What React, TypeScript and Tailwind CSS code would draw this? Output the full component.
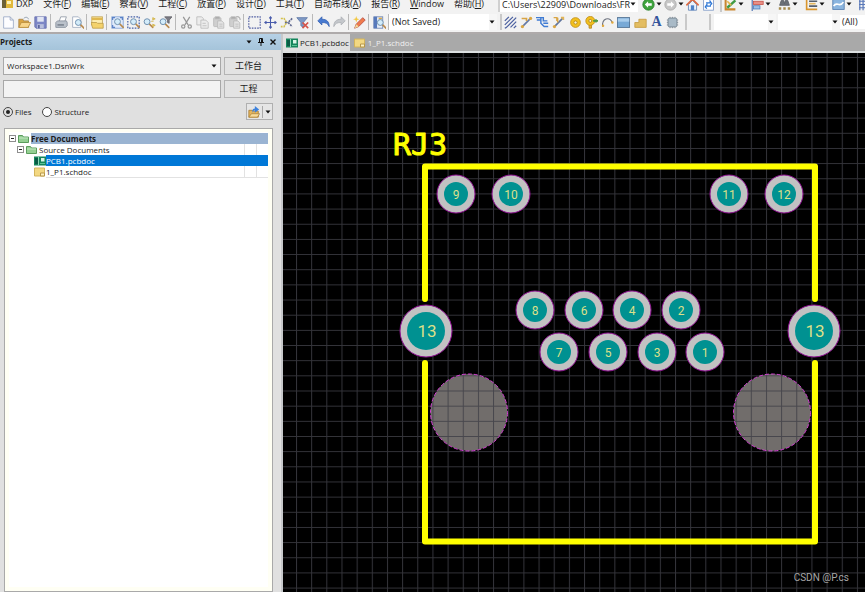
import React, { useState } from 'react';

const menus = [
  ['文件', 'F'],
  ['编辑', 'E'],
  ['察看', 'V'],
  ['工程', 'C'],
  ['放置', 'P'],
  ['设计', 'D'],
  ['工具', 'T'],
  ['自动布线', 'A'],
  ['报告', 'R'],
];

const pads = [
  { n: '9', x: 173, y: 141 },
  { n: '10', x: 228, y: 141 },
  { n: '11', x: 446, y: 141 },
  { n: '12', x: 501, y: 141 },
  { n: '8', x: 252, y: 257 },
  { n: '6', x: 301, y: 257 },
  { n: '4', x: 349, y: 257 },
  { n: '2', x: 398, y: 257 },
  { n: '7', x: 276, y: 299 },
  { n: '5', x: 325, y: 299 },
  { n: '3', x: 374, y: 299 },
  { n: '1', x: 422, y: 299 },
];

const Lens = ({ x = 6, y = 6 }: { x?: number; y?: number }) => (
  <g transform={`translate(${x} ${y})`}>
    <path d="M3 3l4 4" stroke="#b98a4e" strokeWidth="2" strokeLinecap="round" />
    <circle r="3.6" fill="#d3ecfa" stroke="#6f8fae" strokeWidth="1.2" />
  </g>
);

const Clip = () => (
  <g stroke="#b9b9b9" fill="#e4e4e4">
    <rect x="2" y="2" width="9" height="11" rx="1" fill="#cfcfcf" />
    <rect x="4" y="1" width="5" height="2.5" fill="#aaa" />
    <path d="M7 6h5l2.500 2.500V15H7z" />
    <path d="M9 10h4M9 12.500h4" />
  </g>
);

const art: Record<string, React.ReactNode> = {
  'New': <path d="M2 1h8l4 4v10H2zM10 1v4h4" fill="#fdfdff" stroke="#98a6c4" />,
  'Open': (
    <>
      <path d="M1 14V4h5l1 2h6v8z" fill="#d9a443" stroke="#a98345" />
      <path d="M1 14l3-6h11.500l-3 6z" fill="#f8d58a" stroke="#b98d3d" />
      <path d="M7 3c2-2 5-2 6 1" fill="none" stroke="#7e8fa5" />
    </>
  ),
  'Save': (
    <>
      <path d="M1 1h14v14H2.500L1 13.500z" fill="#7d87c6" stroke="#666fae" />
      <rect x="4" y="1" width="8" height="6" fill="#e2e6f4" />
      <rect x="4" y="10" width="8" height="5" fill="#b9c0dd" />
      <rect x="5" y="11" width="2" height="4" fill="#575f98" />
    </>
  ),
  'Print': (
    <>
      <path d="M5 7l2-6h7l-2 6z" fill="#fff" stroke="#8d96a3" />
      <path d="M1 8l2-2h11l1 2v4l-2 2H1z" fill="#bac1ca" stroke="#858e9a" />
      <path d="M3 11h8" stroke="#68717e" strokeWidth="1.5" />
    </>
  ),
  'Preview': (
    <>
      <path d="M2 1h7l3 3v10H2z" fill="#fff" stroke="#9da9bd" />
      <Lens x={9} y={8} />
    </>
  ),
  'Workspace': (
    <>
      <rect x="1" y="1" width="13" height="10" fill="#fdedb0" stroke="#c1a457" />
      <path d="M1 2h13v3H1z" fill="#e0b84f" />
      <path d="M0 8h7l1 1h7v6H2z" fill="#f4d26b" stroke="#bd9c4a" />
    </>
  ),
  'Fit': (
    <>
      <rect x="1" y="1" width="14" height="14" fill="#e1ebfb" stroke="#7f9fd4" />
      <path d="M2 5V2h3M11 2h3v3M2 11v3h3" fill="none" stroke="#5b82c6" strokeWidth="1.5" />
      <Lens x={8} y={7} />
    </>
  ),
  'Fit area': (
    <>
      <rect x="1" y="1" width="14" height="14" fill="none" stroke="#4560a8" strokeWidth="1.5" strokeDasharray="2 1.5" />
      <Lens x={8} y={7} />
    </>
  ),
  'Zoom selected': (
    <>
      <Lens x={5} y={7} />
      <path d="M12 2l3 1.500L12 5zM12 10l3 1.500-3 1.500zM10 6.500h3" fill="#e9cd5e" stroke="#d0b34b" />
    </>
  ),
  'Zoom filter': (
    <>
      <Lens x={5} y={7} />
      <path d="M7 1h9l-3.500 4v4l-2-1V5z" fill="#7b7b83" stroke="#63636b" />
    </>
  ),
  'Cut': (
    <g stroke="#979797" strokeWidth="1.5" fill="none">
      <path d="M4 1l6 10M12 1L6 11" />
      <circle cx="4" cy="13" r="2" />
      <circle cx="12" cy="13" r="2" />
    </g>
  ),
  'Copy': (
    <g fill="#ececec" stroke="#bababa">
      <path d="M1 1h6l2 2v8H1z" />
      <path d="M6 5h6l3 3v7H6zM8 9h4M8 12h5" />
    </g>
  ),
  'Paste': <Clip />,
  'Rubber stamp': (
    <>
      <Clip />
      <path d="M10 1c4-1 5 2 5 4" fill="none" stroke="#b4b4b4" strokeWidth="1.5" />
    </>
  ),
  'Select area': <rect x="1" y="1" width="14" height="14" fill="none" stroke="#4e5ca1" strokeWidth="1.4" strokeDasharray="2 1.3" />,
  'Move': (
    <path d="M8 1v14M1 8h14M6.500 3L8 1l1.500 2M6.500 13L8 15l1.500-2M3 6.500L1 8l2 1.500M13 6.500L15 8l-2 1.500" fill="none" stroke="#485bab" strokeWidth="1.3" />
  ),
  'Deselect': (
    <g fill="none" strokeWidth="2" strokeDasharray="2.500 1">
      <path d="M1 3h4l3 5-3 5H1" stroke="#d3c14e" />
      <path d="M15 3l-5 5 5 5" stroke="#5f688f" />
      <path d="M6 8h4" stroke="#656d8a" />
    </g>
  ),
  'Clear filter': (
    <>
      <path d="M1 2h13L9 8v6l-3-2V8z" fill="#7e99c5" stroke="#5f79a8" />
      <path d="M8 8l7 7M15 8l-7 7" stroke="#d65348" strokeWidth="2" />
    </>
  ),
  'Undo': <path d="M1 6l5-5v3c6 0 9 3 9 9-2-4-4-5-9-5v3z" fill="#477ad1" stroke="#3561b2" />,
  'Redo': <path d="M15 6l-5-5v3c-6 0-9 3-9 9 2-4 4-5 9-5v3z" fill="#c4c7cb" stroke="#acb0b5" />,
  'Cross probe': (
    <>
      <path d="M2 15l2-5 8-8 3 3-8 8z" fill="#ef7b4c" stroke="#b5483e" />
      <path d="M2 15l2-5 3 3z" fill="#f2db9a" />
      <path d="M4 0l1 3 3 1-3 1-1 3-1-3-3-1 3-1z" fill="#f3c944" />
    </>
  ),
  'Browse': (
    <>
      <rect x="1" y="1" width="11" height="14" fill="#e9eef7" stroke="#6580b0" />
      <path d="M1 1h4v14H1z" fill="#5779bb" />
      <path d="M7 3h4" stroke="#d8a94a" strokeWidth="2" />
      <Lens x={9} y={8} />
    </>
  ),
  'Multi-route': <path d="M1 6l5-5M1 11L11 1M3 14L15 2M8 14l7-7M12 15l3-3M1 15l2-1" stroke="#4a5f9f" strokeWidth="1.5" />,
  'Route': (
    <>
      <path d="M2 14L13 3" stroke="#6378a5" strokeWidth="2" />
      <path d="M2 3h6v3" fill="none" stroke="#d9a545" strokeWidth="2" />
      <circle cx="3" cy="13" r="2" fill="#dba744" />
      <circle cx="13" cy="3" r="2" fill="#dba744" />
    </>
  ),
  'Differential pair': (
    <path d="M0 2h9v4h5M1 5h5v4l4 4h5M9 9h6M6 2v7" fill="none" stroke="#3f7bd3" strokeWidth="1.800" />
  ),
  'Line': (
    <>
      <path d="M3 13L13 3" stroke="#5f749c" strokeWidth="2" />
      <path d="M2 2h4v4M7 2v6" fill="none" stroke="#d9a545" strokeWidth="1.8" />
      <circle cx="3" cy="13" r="2" fill="#dba744" />
      <path d="M11 2h3v3" fill="none" stroke="#e2b455" strokeWidth="2" />
    </>
  ),
  'Pad': (
    <>
      <circle cx="8" cy="8" r="6" fill="#f2c01d" stroke="#bf8c16" />
      <circle cx="8" cy="8" r="2" fill="#fff7d0" stroke="#a97c19" />
    </>
  ),
  'Via': (
    <>
      <path d="M5 9v6h3V9z" fill="#e6b52b" stroke="#b78617" />
      <circle cx="6.500" cy="6" r="5.500" fill="#f2c01d" stroke="#bf8c16" />
      <circle cx="6.500" cy="6" r="1.800" fill="#fff7d0" stroke="#a97c19" />
      <path d="M10 6h6M13.500 4v4" stroke="#4f9a45" strokeWidth="2" />
    </>
  ),
  'Arc': (
    <>
      <path d="M2 13C1 3 10 0 14 8" fill="none" stroke="#6e7480" strokeWidth="1.300" />
      <circle cx="2.500" cy="12" r="1.500" fill="#e2a93c" />
      <circle cx="14" cy="8" r="1.500" fill="#e2a93c" />
    </>
  ),
  'Fill': (
    <>
      <rect x="0.500" y="2" width="15" height="12" fill="#78a9d6" stroke="#48698d" />
      <path d="M1 3h14v4H1z" fill="#a9cdec" />
    </>
  ),
  'Polygon': <path d="M1 14V8h5V4h9v10z" fill="#e3bd61" stroke="#c59b41" />,
  'Component': (
    <>
      <path d="M5 1v14M8 1v14M11 1v14M1 5h14M1 8h14M1 11h14" stroke="#8a959f" />
      <rect x="2.500" y="2.500" width="11" height="11" rx="2" fill="#a9bac7" stroke="#6f7d89" />
    </>
  ),
  'Back': (
    <>
      <circle cx="8" cy="8" r="7" fill="#3ea33d" stroke="#2a7f2c" />
      <path d="M3.500 8l4-4v2.500H12v3H7.500V12z" fill="#fff" />
    </>
  ),
  'Forward': (
    <>
      <circle cx="8" cy="8" r="7" fill="#c6c6c6" stroke="#a9a9a9" />
      <path d="M12.500 8l-4-4v2.500H4v3h4.500V12z" fill="#fff" />
    </>
  ),
  'Home': (
    <>
      <path d="M3 8v7h10V8L8 3z" fill="#eaf2fb" stroke="#5c80b3" />
      <path d="M0.500 9L8 1.500 15.500 9" fill="none" stroke="#dd6a43" strokeWidth="2" />
      <rect x="6" y="9" width="4" height="6" fill="#4e82c8" />
    </>
  ),
  'Refresh': (
    <>
      <rect x="2" y="1" width="12" height="14" fill="#fff" stroke="#7995c4" />
      <path d="M5 6h5V4l2 3-2 2M11 10H6V8l-2 3 2 2" fill="none" stroke="#2f78d6" strokeWidth="1.500" />
    </>
  ),
  'Utilities': (
    <>
      <path d="M2 2v12h12" fill="none" stroke="#c9862e" strokeWidth="2.500" />
      <path d="M4 12L14 3" stroke="#3f9a44" strokeWidth="3" />
      <path d="M4 4l5 5" stroke="#e1b54b" strokeWidth="2" />
    </>
  ),
  'Alignment': (
    <>
      <path d="M1.500 0v16" stroke="#5579b8" strokeWidth="1.500" />
      <rect x="3" y="4" width="12" height="4" fill="#e98f86" stroke="#c8544a" />
      <rect x="3" y="9.500" width="8" height="4" fill="#9cc0ea" stroke="#527fb7" />
    </>
  ),
  'Find': (
    <>
      <path d="M2 9l2-6h3l1 4 1-4h3l2 6z" fill="#6b7077" stroke="#565b62" />
      <path d="M1 13h3M6.500 13h3M12 13h3" stroke="#a78b4c" strokeWidth="3" />
    </>
  ),
  'Dimension': (
    <>
      <path d="M2 1v13h13" fill="none" stroke="#d9962e" strokeWidth="2" />
      <path d="M5 4h10M5 10h10" stroke="#575f6b" strokeWidth="2" />
      <path d="M5 7h8" stroke="#e5b75d" strokeWidth="2" />
    </>
  ),
  'Rooms': (
    <>
      <rect x="1" y="2" width="14" height="12" fill="#8bb5df" stroke="#4d78ac" />
      <path d="M2 10c4-7 7 3 12-5" fill="none" stroke="#fff" strokeWidth="2" />
    </>
  ),
  'Grid': <path d="M1 2v13M5 2v13M9 2v13M13 2v13M0 4h16M0 8h16M0 12h16" stroke="#5a79ba" strokeWidth="1.500" />,
};

function ToolButton({ name }: { name: string }) {
  return (
    <button type="button" aria-label={name} className="flex h-4 w-4 shrink-0 items-center justify-center">
      {name === 'String' ? (
        <span className="font-['Liberation_Serif',serif] text-[14px] leading-4 font-bold text-[#35559c]">A</span>
      ) : (
        <svg viewBox="0 0 16 16" className="h-[13px] w-[13px]" fill="none">
          {art[name]}
        </svg>
      )}
    </button>
  );
}

const Arrow = () => (
  <svg viewBox="0 0 6 4" className="h-1 w-1.5 shrink-0">
    <path d="M0.500 0.500h5L3 3.500z" fill="#111" />
  </svg>
);

function Group({ names, className }: { names: string[]; className: string }) {
  return (
    <div className={`flex shrink-0 border-r border-[#b9b9b9] ${className}`}>
      {names.map(n => <ToolButton key={n} name={n} />)}
    </div>
  );
}

function Combo({ label, value, className }: { label: string; value: string; className: string }) {
  return (
    <div className={`relative flex h-4 shrink-0 items-center bg-white ${className}`}>
      <select aria-label={label} className="h-4 w-full appearance-none pl-[3px] leading-4 outline-none">
        <option>{value}</option>
      </select>
      <span className="pointer-events-none absolute inset-y-0 right-0 flex w-2 items-center bg-[#f6f6f6]">
        <Arrow />
      </span>
    </div>
  );
}

function PcbIcon() {
  return (
    <svg viewBox="0 0 12 10" className="h-2.5 w-3 shrink-0">
      <rect width="12" height="9" y="0.500" fill="#14855c" />
      <path d="M1 2h3v6H1z" fill="#0a5a45" />
      <path d="M4.500 1v8" stroke="#8fd8b7" />
      <rect x="7" y="2" width="3.500" height="3.500" fill="#d7f4e5" />
      <path d="M6 7.500h5" stroke="#5cc295" />
    </svg>
  );
}

function SchIcon() {
  return (
    <svg viewBox="0 0 12 10" className="h-2.5 w-3 shrink-0">
      <path d="M0.500 1h10v8h-10z" fill="#f3d882" stroke="#d3b45c" />
      <path d="M6.500 6h4v3h-4z" fill="#fff2c0" stroke="#b8974a" />
    </svg>
  );
}

function FolderIcon() {
  return (
    <svg viewBox="0 0 11 9" className="h-[9px] w-[11px] shrink-0">
      <path d="M0.500 8.500v-7h4l1 1.500h5v5.500z" fill="#95cf93" stroke="#5b9d5c" />
      <path d="M1 4h9" stroke="#c5e9c1" />
    </svg>
  );
}

function Minus() {
  return (
    <svg viewBox="0 0 7 7" className="h-[7px] w-[7px] shrink-0">
      <rect x="0.500" y="0.500" width="6" height="6" fill="#fff" stroke="#8e8e8e" />
      <path d="M2 3.500h3" stroke="#222" />
    </svg>
  );
}

function TopBars() {
  const nav = ['Utilities', 'Alignment', 'Find', 'Dimension', 'Rooms'];
  return (
    <header className="overflow-x-clip border-b-2 border-[#aeaaaa] bg-[#f2f2f2]">
      <nav className="flex h-3 items-start leading-2">
        <div className="flex w-[498px] shrink-0 items-start gap-2.5 pl-0.5">
          <button type="button" className="flex items-start gap-[3px]">
            <svg viewBox="0 0 11 8" className="h-2 w-[11px]">
              <path d="M0 0h11v8H0z" fill="#e2b93c" />
              <path d="M0 0h4v8H0z" fill="#6d6136" />
              <path d="M5 1h4v3H5z" fill="#fff3b8" />
            </svg>
            DXP
          </button>
          {menus.map(([text, key]) => (
            <button key={key} type="button" className="whitespace-nowrap">
              {text}(<u>{key}</u>)
            </button>
          ))}
          <button type="button"><u>W</u>indow</button>
          <button type="button" className="whitespace-nowrap">帮助(<u>H</u>)</button>
        </div>
        <div className="mr-0.5 flex h-3 w-[140px] shrink-0 items-start border-l-2 border-[#d0d0d0] bg-white pl-0.5">
          <input
            aria-label="Document path"
            defaultValue="C:\Users\22909\Downloads\FR."
            className="h-2 w-full min-w-0 outline-none"
          />
          <span className="flex h-2 items-center pr-0.5"><Arrow /></span>
        </div>
        <div className="flex h-3 shrink-0 items-end border-r-2 border-[#c9c9c9] pr-1">
          {['Back', 'Forward'].map(n => (
            <span key={n} className="flex h-4 items-center">
              <ToolButton name={n} />
              <Arrow />
            </span>
          ))}
          <ToolButton name="Home" />
          <ToolButton name="Refresh" />
        </div>
        <div className="flex h-3 shrink-0 items-end gap-[5px]">
          {nav.map(n => (
            <span key={n} className="flex h-4 items-center">
              <ToolButton name={n} />
              <Arrow />
            </span>
          ))}
          <ToolButton name="Grid" />
        </div>
      </nav>

      <div className="flex h-5 items-center">
        <Group className="pr-0.5" names={['New', 'Open', 'Save']} />
        <Group className="pr-px pl-0.5" names={['Print', 'Preview']} />
        <Group className="pr-px pl-0.5" names={['Workspace']} />
        <Group className="px-0.5" names={['Fit', 'Fit area', 'Zoom selected', 'Zoom filter']} />
        <Group className="pr-px pl-0.5" names={['Cut', 'Copy', 'Paste', 'Rubber stamp']} />
        <Group className="px-0.5" names={['Select area', 'Move', 'Deselect', 'Clear filter']} />
        <Group className="pr-px pl-0.5" names={['Undo', 'Redo']} />
        <Group className="pr-px pl-0.5" names={['Cross probe']} />
        <Group className="pr-px pl-0.5" names={['Browse']} />
        <Combo label="Filter" value="(Not Saved)" className="w-[108px]" />
        <div className="ml-[3px] flex h-4 w-[187px] shrink-0 justify-around border-r-2 border-l-2 border-[#c9c9c9] pr-1">
          {['Multi-route', 'Route', 'Differential pair', 'Line', 'Pad', 'Via', 'Arc', 'Fill', 'Polygon', 'String', 'Component'].map(n => (
            <ToolButton key={n} name={n} />
          ))}
        </div>
        <div className="mr-[3px] h-4 w-6 shrink-0 border-r-2 border-[#c9c9c9]" />
        <Combo label="Net" value="" className="mr-0.5 w-[62px]" />
        <Combo label="Layer" value="" className="w-[62px]" />
        <span className="flex-1 bg-white pl-0.5">(All)</span>
      </div>
    </header>
  );
}

function ProjectsPanel() {
  const [view, setView] = useState('files');
  const [selected, setSelected] = useState('PCB1.pcbdoc');

  return (
    <aside className="flex w-[283px] shrink-0 flex-col border-r-2 border-[#c6c8ca] bg-[#e0e0e0] text-[8px] font-medium">
      <div className="flex h-4 items-center bg-linear-to-b from-[#b6d1e6] to-[#a5c4da] pr-[5px]">
        <h2 className="flex-1 font-bold">Projects</h2>
        <div className="flex items-center gap-1.5">
          <button type="button" aria-label="Panel menu"><Arrow /></button>
          <button type="button" aria-label="Pin">
            <svg viewBox="0 0 6 8" className="h-2 w-1.5">
              <path d="M1.500 0.500h3v4h-3zM0 4.500h6M3 5v3" fill="none" stroke="#111" />
              <path d="M3.500 0.500v4" stroke="#111" />
            </svg>
          </button>
          <button type="button" aria-label="Close">
            <svg viewBox="0 0 6 6" className="h-1.5 w-1.5">
              <path d="M0.500 0.500l5 5M5.500 0.500l-5 5" stroke="#111" strokeWidth="1.400" />
            </svg>
          </button>
        </div>
      </div>

      <div className="flex flex-1 flex-col pt-[7px] pr-2 pl-[3px]">
        <div className="flex gap-[3px]">
          <div className="relative flex-1">
            <select aria-label="Workspace" className="block h-[18px] w-full appearance-none border border-[#a8a8a8] bg-[#f3f3f3] pl-[3px] outline-none">
              <option>Workspace1.DsnWrk</option>
            </select>
            <span className="pointer-events-none absolute inset-y-0 right-1 flex items-center"><Arrow /></span>
          </div>
          <button type="button" className="h-[18px] w-[49px] border border-[#b4b4b4] bg-[#e3e3e3] text-[9px] leading-4 font-normal">工作台</button>
        </div>
        <div className="mt-[5px] flex gap-[3px]">
          <input aria-label="Project" className="h-[18px] min-w-0 flex-1 border border-[#a8a8a8] bg-[#f3f3f3] px-1 outline-none" />
          <button type="button" className="h-[18px] w-[49px] border border-[#b4b4b4] bg-[#e3e3e3] text-[9px] leading-4 font-normal">工程</button>
        </div>
        <div className="mt-[5px] flex items-center">
          {[['files', 'Files'], ['structure', 'Structure']].map(([id, label]) => (
            <label key={id} className="mr-[11px] flex items-center gap-0.5">
              <input
                type="radio"
                name="view"
                checked={view === id}
                onChange={() => setView(id)}
                className="h-2.5 w-2.5 appearance-none rounded-full border border-[#444] bg-white p-0.5 checked:bg-[#222] checked:bg-clip-content"
              />
              {label}
            </label>
          ))}
          <button type="button" aria-label="Open project" className="ml-auto flex h-[17px] w-[27px] items-center justify-between border border-[#b0b0b0] bg-[#e6e6e6] px-px">
            <svg viewBox="0 0 14 14" className="h-3 w-3">
              <path d="M1 13V5h4l1 1h6v7z" fill="#e6b55a" stroke="#a97e36" />
              <path d="M1 13l3-4h9.500L11 13z" fill="#f9dc9b" stroke="#b38a42" />
              <path d="M5 8c0-4 1-5 3-5V0l5 4-5 4V5C7 5 6 6 5 8z" fill="#3e82dc" />
            </svg>
            <span className="h-3 border-l border-[#aaa]" />
            <Arrow />
          </button>
        </div>

        <div role="tree" className="mt-2 ml-px flex-1 border border-[#a9a9a9] bg-[#fffff4] pt-[3px] pr-1 pb-1 pl-1 leading-[11px]">
          <div className="min-h-full bg-white">
            <div role="treeitem" aria-expanded="true" className="flex h-3 items-center gap-0.5">
              <Minus />
              <FolderIcon />
              <span className="flex-1 bg-[#9ab4d2] font-bold">Free Documents</span>
            </div>
            <div role="treeitem" aria-expanded="true" className="flex h-[11px] items-center gap-0.5 pl-2">
              <Minus />
              <FolderIcon />
              <span className="flex-1">Source Documents</span>
              <span className="h-full w-2.5 border-l border-[#e2e2e2]" />
              <span className="h-full w-3 border-l border-[#e2e2e2]" />
            </div>
            {['PCB1.pcbdoc', '1_P1.schdoc'].map(name => (
              <button
                key={name}
                role="treeitem"
                type="button"
                onClick={() => setSelected(name)}
                className="flex h-[11px] w-full items-center pl-[25px] text-left"
              >
                {name.startsWith('PCB') ? <PcbIcon /> : <SchIcon />}
                <span className={`flex flex-1 gap-0.5 ${selected === name ? 'bg-[#0078d7] text-white' : 'border-b border-[#e2e2e2]'}`}>
                  <span className="flex-1">{name}</span>
                  {selected !== name && (
                    <>
                      <span className="w-2.5 border-l border-[#e2e2e2]" />
                      <span className="w-3 border-l border-[#e2e2e2]" />
                    </>
                  )}
                </span>
              </button>
            ))}
          </div>
        </div>
      </div>
    </aside>
  );
}

function Board() {
  return (
    <svg className="absolute inset-0 h-full w-full bg-black" role="img" aria-label="RJ3 footprint">
      <defs>
        <pattern id="grid" x="13" y="4" width="15.160" height="15.160" patternUnits="userSpaceOnUse">
          <path d="M0.500 0v15.160M0 0.500h15.160" stroke="#34343a" />
        </pattern>
        <pattern id="holeGrid" x="13" y="4" width="15.160" height="15.160" patternUnits="userSpaceOnUse">
          <rect width="16" height="16" fill="#716d6b" />
          <path d="M0.500 0v15.160M0 0.500h15.160" stroke="#47464c" />
        </pattern>
      </defs>
      <rect width="100%" height="100%" fill="url(#grid)" />

      <text x="110" y="102" fill="#ff0" stroke="#ff0" strokeWidth="1" strokeLinejoin="round" fontSize="30" className="font-['DejaVu_Sans_Mono',monospace]">RJ3</text>
      <path
        d="M142 246V113.500H532V246M142 310V488.500H532V310"
        fill="none"
        stroke="#ff0"
        strokeWidth="6"
        strokeLinecap="round"
        strokeLinejoin="round"
      />

      {[186, 489].map(x => (
        <circle key={x} cx={x} cy="359.500" r="38.500" fill="url(#holeGrid)" stroke="#d33fd3" strokeDasharray="4 2" />
      ))}

      <g textAnchor="middle" fill="#dde08a" className="font-['Roboto',sans-serif]">
        {pads.map(p => (
          <g key={p.n}>
            <circle cx={p.x} cy={p.y} r="19" fill="#c2c2c2" stroke="#8f1092" />
            <circle cx={p.x} cy={p.y} r="12" fill="#009191" />
            <text x={p.x} y={p.y + 5} fontSize="12">{p.n}</text>
          </g>
        ))}
        {[143, 531].map(x => (
          <g key={x}>
            <circle cx={x} cy="278" r="26" fill="#c2c2c2" stroke="#8f1092" />
            <circle cx={x} cy="278" r="19" fill="#009191" />
            <text x={x + 1} y="284" fontSize="17">13</text>
          </g>
        ))}
      </g>
    </svg>
  );
}

export default function App() {
  return (
    <div className="flex min-h-screen flex-col overflow-x-clip bg-[#e0e0e0] font-['Open_Sans','Noto_Sans_CJK_SC',sans-serif] text-[9px] text-[#1c1c1c]">
      <TopBars />
      <div className="flex flex-1">
        <ProjectsPanel />
        <main className="flex min-w-0 flex-1 flex-col">
          <div role="tablist" className="flex h-[19px] items-stretch border-b-2 border-[#dcdfe0] bg-[#a9a9a9] text-[8px] font-medium">
            <button type="button" role="tab" aria-selected="true" className="flex items-center gap-0.5 bg-[#e0e0e0] pr-px pl-[3px]">
              <PcbIcon />
              PCB1.pcbdoc
            </button>
            <button type="button" role="tab" aria-selected="false" className="flex items-center gap-0.5 pl-1 text-[#f0f0f0]">
              <SchIcon />
              1_P1.schdoc
            </button>
          </div>
          <div className="relative min-h-[500px] flex-1">
            <Board />
            <span className="absolute right-4 bottom-2 font-['Roboto',sans-serif] text-[10px] leading-3 text-[#a6a6a6]">CSDN @P.cs</span>
          </div>
        </main>
      </div>
    </div>
  );
}
